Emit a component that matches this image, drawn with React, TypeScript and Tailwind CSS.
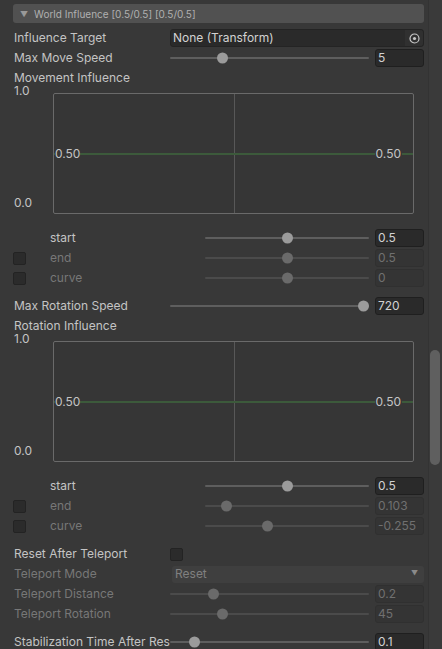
import type { ReactNode } from 'react';

type SliderProps = { value: number; min: number; max: number; disabled?: boolean };

const Label = ({ children, disabled, className = '' }: { children: ReactNode; disabled?: boolean; className?: string }) => (
  <div
    className={`shrink-0 overflow-hidden whitespace-nowrap pl-px ${disabled ? 'text-[#777]' : 'text-[#c4c4c4]'} ${className}`}
  >
    {children}
  </div>
);

const Slider = ({ value, min, max, disabled }: SliderProps) => {
  const t = (value - min) / (max - min);
  return (
    <div className="relative flex h-full flex-1 items-center">
      <div className={`h-[2px] w-full rounded-full ${disabled ? 'bg-[#4b4b4b]' : 'bg-[#5e5e5e]'}`} />
      <div
        className={`absolute top-1/2 h-[11px] w-[11px] -translate-y-1/2 rounded-full ${disabled ? 'bg-[#6a6a6a]' : 'bg-[#9b9b9b]'}`}
        style={{ left: `calc(${t} * (100% - 11px))` }}
      />
    </div>
  );
};

const NumField = ({ text, disabled }: { text: string; disabled?: boolean }) => (
  <div
    className={`ml-1.5 flex h-[18px] w-[49px] shrink-0 items-center rounded-[3px] border pl-[2px] ${
      disabled ? 'border-[#303030] bg-[#343434] text-[#707070]' : 'border-[#1f1f1f] bg-[#2a2a2a] text-[#d2d2d2]'
    }`}
  >
    {text}
  </div>
);

const Checkbox = () => (
  <div className="h-[13px] w-[13px] shrink-0 rounded-[2px] border border-[#232323] bg-[#2b2b2b]" />
);

const SliderRow = ({ label, value, min, max, text, disabled }: SliderProps & { label: string; text: string }) => (
  <div className="flex h-5 items-center">
    <Label disabled={disabled} className="w-[157px]">
      {label}
    </Label>
    <Slider value={value} min={min} max={max} disabled={disabled} />
    <NumField text={text} disabled={disabled} />
  </div>
);

const SubRow = ({ label, value, min, max, text, toggle }: SliderProps & { label: string; text: string; toggle?: boolean }) => (
  <div className="flex h-5 items-center">
    <div className="flex w-[36px] shrink-0 items-center">{toggle && <Checkbox />}</div>
    <Label disabled={toggle} className="w-[156px]">
      {label}
    </Label>
    <Slider value={value} min={min} max={max} disabled={toggle} />
    <NumField text={text} disabled={toggle} />
  </div>
);

// flat curve preview with the 0..1 axis labels on the left
const CurveBox = () => (
  <div className="-mt-[3px] flex h-[130px]">
    <div className="flex h-[124px] w-[40px] shrink-0 flex-col justify-between pl-px text-[#c4c4c4]">
      <span className="leading-3">1.0</span>
      <span className="leading-3">0.0</span>
    </div>
    <div className="relative mt-2 h-[121px] w-[361px] rounded-[2px] border border-[#6a6a6a] bg-[#363636]">
      <div className="absolute inset-y-0 left-1/2 w-px bg-[#585858]" />
      <div className="absolute inset-x-0 top-1/2 h-[2px] -translate-y-1/2 bg-[#3c5a3b]" />
      <div className="absolute inset-x-0 top-1/2 flex -translate-y-1/2 justify-between pl-px pr-[11px] leading-3 text-[#c4c4c4]">
        <span className="bg-[#363636]">0.50</span>
        <span className="bg-[#363636] px-px">0.50</span>
      </div>
    </div>
  </div>
);

const TargetIcon = () => (
  <svg width="11" height="11" viewBox="0 0 11 11" fill="none">
    <circle cx="5.5" cy="5.5" r="4.5" stroke="#c8c8c8" strokeWidth="1.2" />
    <circle cx="5.5" cy="5.5" r="1.6" fill="#c8c8c8" />
  </svg>
);

export default function App() {
  return (
    <div className="flex h-[649px] w-[442px] overflow-hidden bg-[#383838] font-['Inter','Liberation_Sans',sans-serif] text-[12px] leading-[14px]">
      <div className="w-[428px] shrink-0 pl-[13px] pr-[4px] pt-1">
        <div className="flex h-[19px] items-center rounded-[3px] bg-[#515151] pl-[7px] text-[10px] text-[#b0b0b0]">
          <span className="mr-[6px] text-[8px] text-[#999]">▼</span>
          World Influence [0.5/0.5] [0.5/0.5]
        </div>

        <div className="mt-[5px] flex h-5 items-center">
          <Label className="w-[157px]">Influence Target</Label>
          <div className="flex h-[18px] flex-1 items-center rounded-[3px] border border-[#242424] bg-[#2a2a2a] text-[#d2d2d2]">
            <span className="flex-1 pl-[2px]">None (Transform)</span>
            <div className="flex h-full w-[18px] items-center justify-center rounded-r-[3px] bg-[#303030]">
              <TargetIcon />
            </div>
          </div>
        </div>
        <SliderRow label="Max Move Speed" value={5} min={0} max={20} text="5" />
        <div className="flex h-5 items-center">
          <Label>Movement Influence</Label>
        </div>
        <CurveBox />
        <div className="mt-[13px]">
          <SubRow label="start" value={0.5} min={0} max={1} text="0.5" />
          <SubRow label="end" value={0.5} min={0} max={1} text="0.5" toggle />
          <SubRow label="curve" value={0} min={-1} max={1} text="0" toggle />
        </div>

        <div className="mt-2">
          <SliderRow label="Max Rotation Speed" value={720} min={0} max={720} text="720" />
        </div>
        <div className="flex h-5 items-center">
          <Label>Rotation Influence</Label>
        </div>
        <CurveBox />
        <div className="mt-[13px]">
          <SubRow label="start" value={0.5} min={0} max={1} text="0.5" />
          <SubRow label="end" value={0.103} min={0} max={1} text="0.103" toggle />
          <SubRow label="curve" value={-0.255} min={-1} max={1} text="-0.255" toggle />
        </div>

        <div className="mt-2 flex h-5 items-center">
          <Label className="w-[157px]">Reset After Teleport</Label>
          <Checkbox />
        </div>
        <div className="flex h-5 items-center">
          <Label disabled className="w-[159px]">
            Teleport Mode
          </Label>
          <div className="flex h-[17px] flex-1 items-center justify-between rounded-[3px] bg-[#3f3f3f] pl-[3px] pr-[6px] text-[#808080]">
            <span>Reset</span>
            <span className="text-[7px] text-[#8a8a8a]">▼</span>
          </div>
        </div>
        <SliderRow label="Teleport Distance" value={0.2} min={0} max={1} text="0.2" disabled />
        <SliderRow label="Teleport Rotation" value={45} min={0} max={180} text="45" disabled />
        <div className="mt-2">
          <SliderRow label="Stabilization Time After Reset" value={0.1} min={0} max={1} text="0.1" />
        </div>
      </div>

      <div className="flex-1 border-l border-[#333] bg-[#3a3a3a] pl-[1px] pt-[350px]">
        <div className="h-[115px] w-[10px] rounded-full bg-[#5f5f5f]" />
      </div>
    </div>
  );
}
